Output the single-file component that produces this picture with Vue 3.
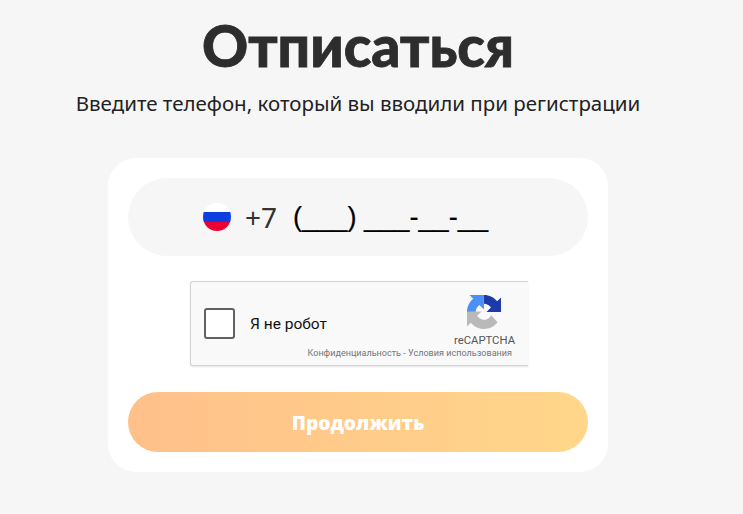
<script setup>
const title = 'Отписаться'
const subtitle = 'Введите телефон, который вы вводили при регистрации'
</script>

<template>
  <main class="page">
    <h1 class="title">{{ title }}</h1>
    <p class="subtitle">{{ subtitle }}</p>
    <section class="card">
      <div class="phone">
        <svg class="flag" width="28" height="28" viewBox="0 0 28 28">
          <defs><clipPath id="flagClip"><circle cx="14" cy="14" r="14" /></clipPath></defs>
          <g clip-path="url(#flagClip)">
            <rect width="28" height="9" fill="#fff" />
            <rect y="9" width="28" height="10" fill="#0d3fe0" />
            <rect y="19" width="28" height="9" fill="#ee0033" />
          </g>
        </svg>
        <span class="code">+7</span>
        <span class="mask">(___) ___-__-__</span>
      </div>
      <div class="captcha">
        <span class="check"></span>
        <span class="robot">Я не робот</span>
        <div class="brand">
          <svg class="logo" width="34" height="34" viewBox="0 0 64 64">
            <path d="M64 31.955l-.033-1.37V4.687l-7.16 7.16C50.948 4.674 42.033.093 32.05.093v16.37c.485 0 .86.057 1.135.163 4.976.393 9.29 3.14 11.83 7.124l-8.307 8.307 26.293.01" fill="#1c3aa9" />
            <path d="M31.862 0l-1.37.033H4.594l7.16 7.16C4.580 13.052 0 21.967 0 31.950h16.260c0-.485.057-.86.163-1.135.393-4.976 3.14-9.29 7.124-11.830l8.307 8.307.01-26.293" fill="#4a90f5" />
            <path d="M.001 31.955l.033 1.370v25.898l7.160-7.160c5.860 7.173 14.774 11.754 24.760 11.754 10.400 0 19.622-4.960 25.458-12.640L45.676 38.317a15.550 15.550 0 0 1-4.754 5.334c-2.050 1.600-4.952 2.906-8.968 2.906-.485 0-.860-.057-1.135-.163-4.976-.393-9.290-3.140-11.830-7.124l8.307-8.307-26.293-.010" fill="#b9b9b9" />
          </svg>
          <span class="brand-name">reCAPTCHA</span>
        </div>
        <span class="terms">Конфиденциальность - Условия использования</span>
      </div>
      <button class="submit" type="button">Продолжить</button>
    </section>
  </main>
</template>

<style scoped>
.page {
  box-sizing: border-box;
  display: flex;
  flex-direction: column;
  align-items: center;
  height: 514px;
  padding-right: 27px;
  overflow: hidden;
  background: #f6f6f6;
  font-family: "Open Sans", "Noto Sans", sans-serif;
}
.title {
  margin: 11px 0 0;
  font-family: Lato, "Noto Sans", sans-serif;
  font-size: 57px;
  line-height: 68px;
  font-weight: 900;
  color: #2d2d2d;
  -webkit-text-stroke: 0.8px #2d2d2d;
}
.subtitle {
  margin: 11px 0 0;
  font-size: 20.500px;
  line-height: 26px;
  color: #222;
  font-family: "Noto Sans", sans-serif;
}
.card {
  box-sizing: border-box;
  display: flex;
  flex-direction: column;
  width: 500px;
  height: 314px;
  margin-top: 42px;
  padding: 20px;
  border-radius: 28px;
  background: #fff;
}
.phone {
  display: flex;
  align-items: center;
  justify-content: center;
  height: 78px;
  padding-right: 25px;
  border-radius: 39px;
  background: #f6f6f6;
  font-family: "Noto Sans", sans-serif;
  font-size: 28px;
  color: #222;
}
.flag {
  margin-right: 14px;
}
.code {
  margin-right: 16px;
  color: #333;
}
.mask {
  font-family: "Liberation Sans", sans-serif;
  font-size: 27.200px;
  color: #000;
  white-space: pre;
  -webkit-text-stroke: 0.2px #000;
}
.captcha {
  position: relative;
  box-sizing: border-box;
  display: flex;
  align-items: center;
  align-self: flex-start;
  width: 338px;
  height: 85px;
  margin: 25px 0 0 62px;
  padding-left: 13px;
  border: 1px solid #d3d3d3;
  border-right: 0;
  border-radius: 3px 0 0 3px;
  background: #f9f9f9;
  box-shadow: 0 1px 2px rgba(0, 0, 0, 0.1);
  font-family: Roboto, "Liberation Sans", sans-serif;
}
.check {
  box-sizing: border-box;
  width: 31px;
  height: 31px;
  border: 2px solid #616161;
  border-radius: 3px;
  background: #fff;
}
.robot {
  margin-left: 15px;
  font-size: 15.500px;
  color: #111;
}
.brand {
  position: absolute;
  top: 13px;
  right: 13px;
  display: flex;
  flex-direction: column;
  align-items: center;
}
.brand-name {
  margin-top: 5px;
  font-size: 11.300px;
  line-height: 13px;
  color: #555;
}
.terms {
  position: absolute;
  right: 16px;
  bottom: 6px;
  font-size: 9.070px;
  line-height: 11px;
  white-space: nowrap;
  color: #777;
}
.submit {
  height: 60px;
  margin-top: 26px;
  padding: 0;
  border: 0;
  border-radius: 30px;
  background: linear-gradient(90deg, #ffc08a, #ffd78a);
  color: #fff;
  font-family: "Open Sans", sans-serif;
  font-size: 19.200px;
  font-weight: 800;
}
</style>
